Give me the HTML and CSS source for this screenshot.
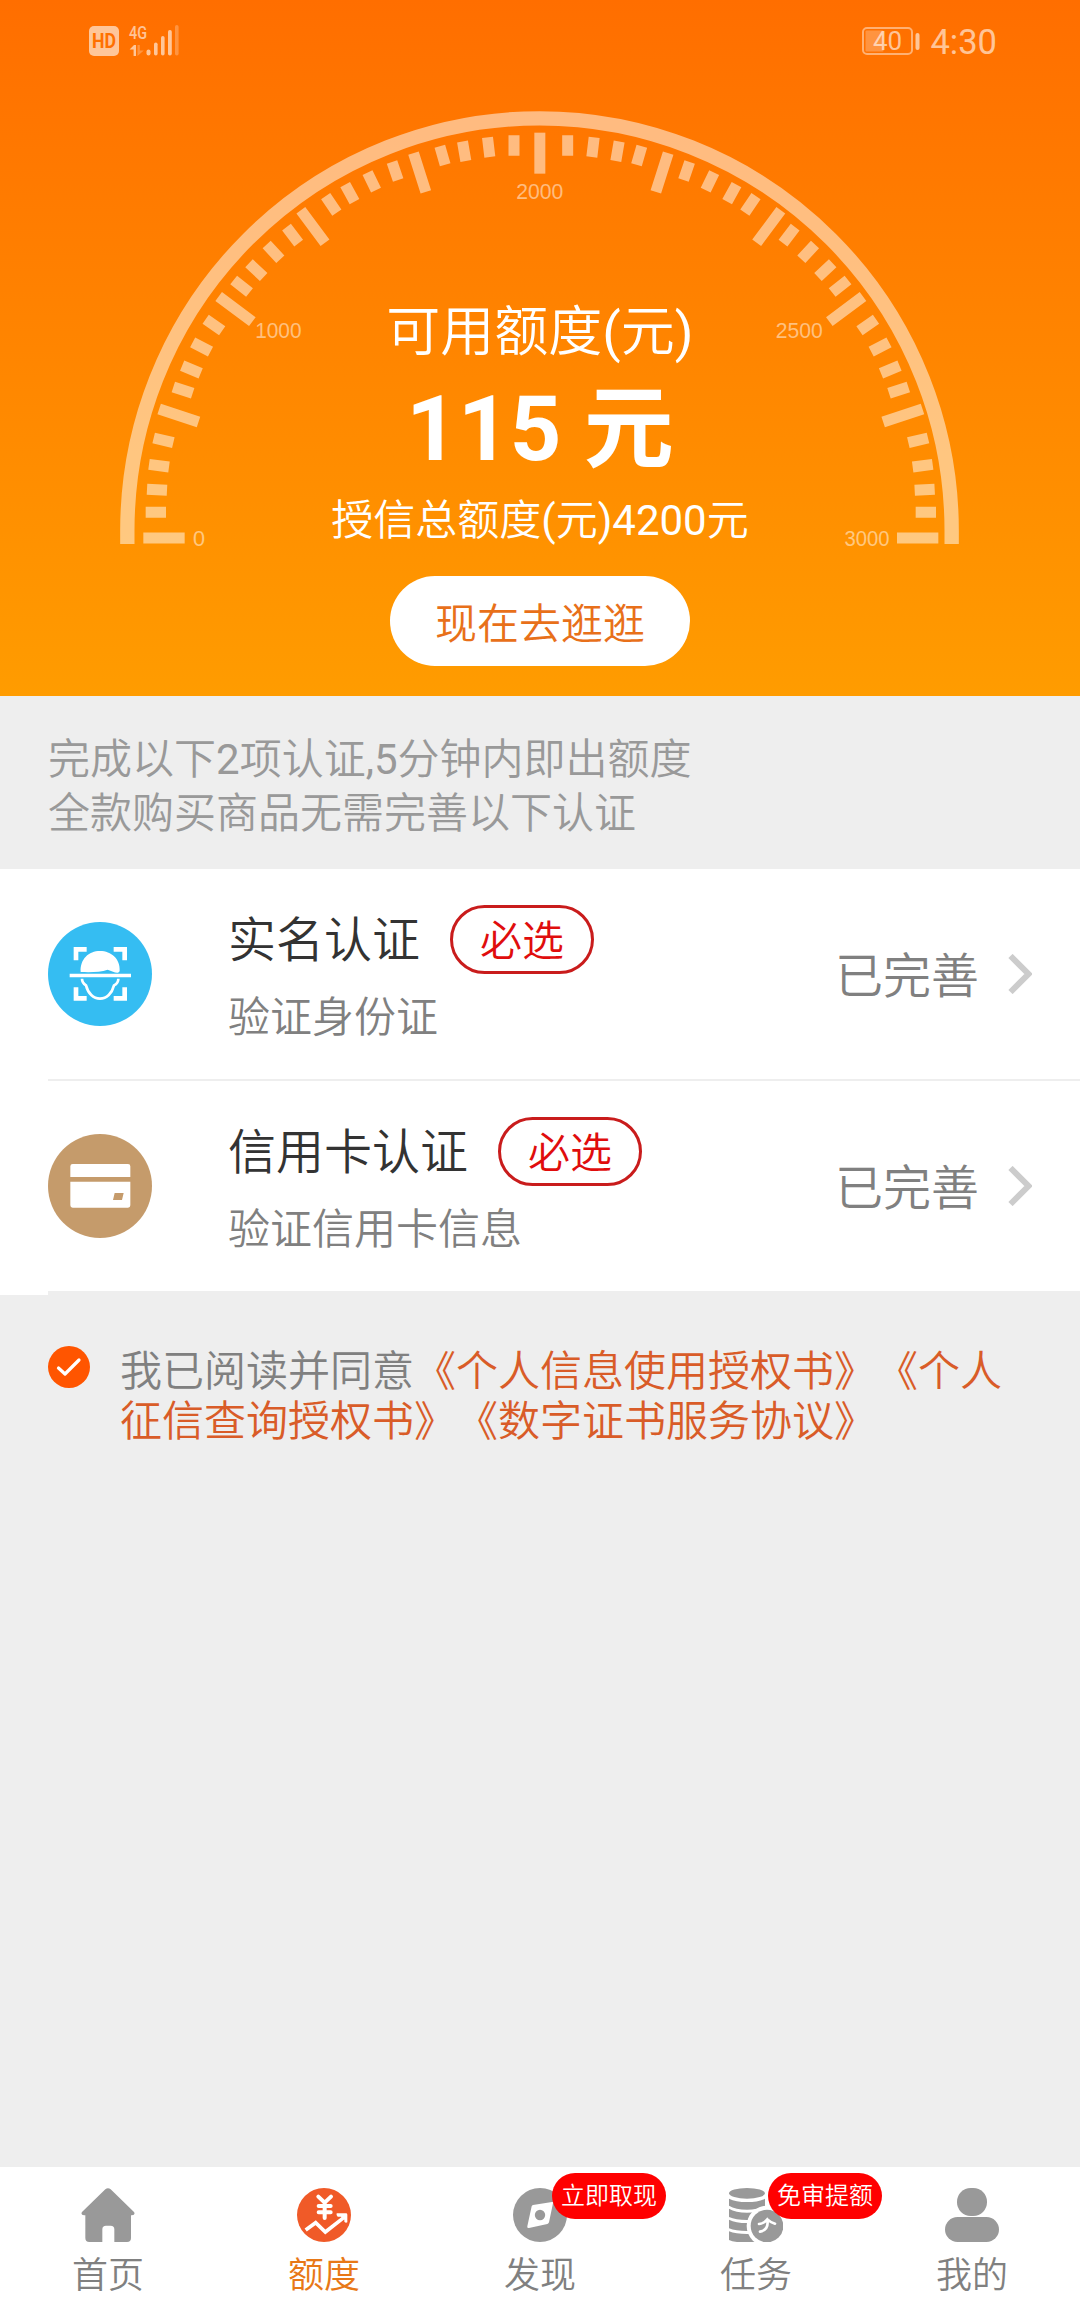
FILE: index.html
```html
<!DOCTYPE html>
<html lang="zh-CN">
<head>
<meta charset="utf-8">
<title>额度</title>
<link rel="stylesheet" href="styles.css">
</head>
<body>
<div class="screen">
  <header class="hero">
    <div class="status">
      <svg class="status-left" width="92" height="46" viewBox="0 -6 92 46">
        <rect x="0" y="2" width="30" height="30" rx="5" fill="#fff" fill-opacity=".6"/>
        <text class="hd" x="3" y="24" textLength="24" lengthAdjust="spacingAndGlyphs">HD</text>
        <text class="net" x="40" y="14.500" textLength="18" lengthAdjust="spacingAndGlyphs">4G</text>
        <g fill="#fff" fill-opacity=".6">
          <path d="M45 21h2v11h-2.400v-6.500h-4z"/>
          <path fill-opacity=".25" d="M48.500 21h2.300v5.500h4l-6.300 5.500z"/>
          <rect x="57.500" y="25.500" width="4" height="6" rx="2"/>
          <rect x="65" y="18.500" width="3.600" height="13" rx="1.800"/>
          <rect x="72" y="12" width="3.600" height="19.500" rx="1.800"/>
          <rect x="79" y="6" width="3.800" height="25.500" rx="1.800"/>
          <rect x="86" y="1" width="3.600" height="30.500" rx="1.800" fill-opacity=".25"/>
        </g>
      </svg>
      <div class="status-right">
        <svg width="58" height="28" viewBox="0 0 58 28">
          <rect x="1" y="1" width="49" height="26" rx="4" fill="none" stroke="#fff" stroke-opacity=".45" stroke-width="2"/>
          <rect x="3.500" y="3.500" width="18" height="21" rx="1" fill="#fff" fill-opacity=".25"/>
          <rect x="53.500" y="6" width="4" height="17" rx="2" fill="#fff" fill-opacity=".6"/>
          <text class="charge" x="25.500" y="23" text-anchor="middle">40</text>
        </svg>
        <span class="clock">4:30</span>
      </div>
    </div>

    <svg class="gauge" viewBox="0 0 2640 1350">
      <defs>
        <g id="ticks">
          <path d="M130 1314H254M177.500 927L295.500 966M356 589.500L457 665M602.500 330.500L675 428.500M940.500 159.500L977.500 275.500"/>
          <path d="M137 1237H198M141 1168L201 1171M147 1093L207 1101M161 1014L220 1028"/>
          <path d="M220 861L278 880M246.500 797L302 820M278 727L331.500 755M317 658L366.500 692"/>
          <path d="M401 540L448.500 577.500M447 490L491 531M500 433.500L541 478M559.500 381.500L596 429.500"/>
          <path d="M677 288.500L710.500 338M735.500 254L763.500 305M802.500 218L828 270.500M876 186L894.500 240"/>
          <path d="M1019.500 139L1035.500 194M1087.500 124.500L1097.500 183M1162.500 112L1169.500 171M1242 106V167"/>
        </g>
      </defs>
      <g fill="none" stroke="#fff" stroke-opacity=".5">
        <path stroke-width="43" d="M82 1332V1291A1236.500 1236.500 0 0 1 2555 1291V1332"/>
        <g stroke-width="33">
          <use href="#ticks"/>
          <path d="M1319.500 98V221"/>
          <use href="#ticks" transform="translate(2645 0) scale(-1 1)"/>
        </g>
      </g>
      <g class="scale">
        <text x="297" y="1337">0</text>
        <text x="535" y="713" textLength="139" lengthAdjust="spacingAndGlyphs">1000</text>
        <text x="1319.500" y="298" textLength="141" lengthAdjust="spacingAndGlyphs">2000</text>
        <text x="2098" y="713" textLength="141" lengthAdjust="spacingAndGlyphs">2500</text>
        <text x="2301" y="1337" textLength="135" lengthAdjust="spacingAndGlyphs">3000</text>
      </g>
    </svg>

    <div class="quota">
      <div class="quota-label">可用额度<span class="num">(</span>元<span class="num">)</span></div>
      <div class="quota-value">115 元</div>
      <div class="quota-total">授信总额度<span class="num">(</span>元<span class="num">)4200</span>元</div>
      <a class="shop">现在去逛逛</a>
    </div>
  </header>

  <p class="hint">完成以下<span class="num">2</span>项认证<span class="num">,5</span>分钟内即出额度<br>全款购买商品无需完善以下认证</p>

  <section class="list">
    <div class="row">
      <svg class="row-icon" viewBox="0 0 312 312">
        <circle cx="156" cy="156" r="156" fill="#35bdf2"/>
        <g fill="none" stroke="#fff" stroke-width="14">
          <path d="M84 115V82H116M197 82H230V115M230 196V229H197M116 229H84V196"/>
          <path stroke-width="11" d="M65 160.500H249"/>
          <path stroke-width="8" stroke-linejoin="round" d="M102 170C102 181 108 186 114 190C120 214 136 230 156 230C176 230 192 214 198 190C206 186 211 180 211 170"/>
        </g>
        <path fill="#fff" d="M98 150C96 111 122 87 156 87C190 87 217 111 215 146C213 155 203 152 195 149L179 143C157 151 127 151 98 150Z"/>
      </svg>
      <div class="row-main">
        <div class="row-head"><span class="row-title">实名认证</span><span class="tag">必选</span></div>
        <div class="row-sub">验证身份证</div>
      </div>
      <span class="row-state">已完善</span>
      <svg class="chevron" width="24" height="40" viewBox="0 0 24 40"><path d="M2.500 2L20.500 20L2.500 38"/></svg>
    </div>
    <div class="divider"></div>
    <div class="row">
      <svg class="row-icon" viewBox="0 0 312 312">
        <circle cx="156" cy="156" r="156" fill="#c59b6b"/>
        <path fill="#fff" fill-rule="evenodd" d="M74 90H240Q247 90 247 97V129H67V97Q67 90 74 90ZM67 143H247V214Q247 221 240 221H74Q67 221 67 214ZM200 177L195 198H222L227 177Z"/>
      </svg>
      <div class="row-main">
        <div class="row-head"><span class="row-title">信用卡认证</span><span class="tag">必选</span></div>
        <div class="row-sub">验证信用卡信息</div>
      </div>
      <span class="row-state">已完善</span>
      <svg class="chevron" width="24" height="40" viewBox="0 0 24 40"><path d="M2.500 2L20.500 20L2.500 38"/></svg>
    </div>
    <div class="divider divider-last"></div>
  </section>

  <div class="agree">
    <svg class="check" width="42" height="42" viewBox="0 0 42 42">
      <circle cx="21" cy="21" r="21" fill="#ff5500"/>
      <path d="M10.500 22L17 28L31 14" fill="none" stroke="#fff" stroke-width="3.200" stroke-linecap="round" stroke-linejoin="round"/>
    </svg>
    <p class="agree-text">我已阅读并同意<a>《个人信息使用授权书》</a><a>《个人征信查询授权书》</a><a>《数字证书服务协议》</a></p>
  </div>

  <nav class="tabs">
    <a class="tab">
      <svg viewBox="0 0 162 162"><path fill="#999" d="M73 4Q81 -3 89 4L159 72Q164 81 153 82H150V150Q150 162 138 162H100V124Q100 113 89 113H75Q64 113 64 124V162H25Q13 162 13 150V82H9Q-2 81 3 72Z"/></svg>
      <span>首页</span>
    </a>
    <a class="tab tab-on">
      <svg viewBox="0 0 162 162">
        <circle cx="81" cy="81" r="81" fill="#f05a28"/>
        <g fill="none" stroke="#fff" stroke-linecap="round" stroke-linejoin="round">
          <path stroke-width="12" d="M64 26L83 44L102 26M83 44V90M65 54H101M65 73H101"/>
          <path stroke-width="11" stroke-linecap="butt" stroke-linejoin="miter" d="M26 126L56 104L85 132L144 86"/>
        </g>
        <path fill="#fff" d="M119 76H147Q151 76 151 80V103Q146 106 142 101V95L132 86H122Q117 82 119 76Z"/>
      </svg>
      <span>额度</span>
    </a>
    <a class="tab">
      <svg viewBox="0 0 162 162">
        <circle cx="81" cy="81" r="81" fill="#999"/>
        <path fill="#fff" d="M60 51L117 42Q121 41 120 46L108 103Q107 107 103 108L48 120Q41 121 43 115L56 55Q57 52 60 51Z"/>
        <circle cx="81" cy="81" r="15.500" fill="#999"/>
      </svg>
      <b class="badge">立即取现</b>
      <span>发现</span>
    </a>
    <a class="tab">
      <svg viewBox="0 0 162 162">
        <g fill="#999">
          <ellipse cx="54" cy="16" rx="54" ry="16"/>
          <path d="M0 32Q20 42 54 42T108 32V53Q88 65 54 65T0 53Z"/>
          <path d="M0 62Q20 74 54 74T108 62V80Q88 96 54 96T0 87Z"/>
          <path d="M0 95Q20 105 54 105H90V129H54Q20 129 0 121Z"/>
          <path d="M0 130Q20 138 54 138H90V162H24Q8 161 0 156Z"/>
        </g>
        <circle cx="114" cy="114" r="61" fill="#fff"/>
        <circle cx="114" cy="114" r="49" fill="#999"/>
        <path d="M90 108Q104 107 115 94Q123 102 138 107M115 96Q120 126 93 131" fill="none" stroke="#fff" stroke-width="8" stroke-linecap="round"/>
      </svg>
      <b class="badge">免审提额</b>
      <span>任务</span>
    </a>
    <a class="tab">
      <svg viewBox="0 0 162 162"><rect x="36" y="0" width="90" height="84" rx="41" fill="#999"/><rect x="0" y="87" width="162" height="75" rx="37.500" fill="#999"/></svg>
      <span>我的</span>
    </a>
  </nav>
</div>
</body>
</html>
```
FILE: styles.css
```css
* { box-sizing: border-box; }
body {
  margin: 0;
  background: #eee;
  font-family: Roboto, "Noto Sans CJK SC", sans-serif;
  font-weight: 350;
  text-spacing-trim: space-all;
}
p { margin: 0; }
.screen {
  width: 1080px;
  height: 2312px;
  display: flex;
  flex-direction: column;
}

/* header */
.hero {
  position: relative;
  height: 696px;
  background: linear-gradient(#ff6e00, #ff9c00);
  color: #fff;
}
.status {
  height: 80px;
  padding: 2px 83px 0 89px;
  display: flex;
  justify-content: space-between;
  align-items: center;
}
.status-right { display: flex; align-items: center; gap: 10px; }
.hd { font: bold 20px Roboto, sans-serif; fill: #ff7000; }
.net { font: 500 19px Roboto, sans-serif; fill: rgba(255, 255, 255, .6); }
.charge { font: 400 26px Roboto, sans-serif; fill: rgba(255, 255, 255, .6); }
.clock { font-size: 34.5px; font-weight: 400; line-height: 36px; padding-top: 1px; color: rgba(255, 255, 255, .6); }
.gauge {
  position: absolute;
  left: 100px;
  top: 100px;
  width: 880px;
  height: 450px;
}
.scale { font: 65px "Liberation Sans", sans-serif; fill: rgba(255, 255, 255, .5); text-anchor: middle; }
.quota {
  position: relative;
  padding-top: 216px;
  display: flex;
  flex-direction: column;
  align-items: center;
}
.quota-label { font-size: 54px; line-height: 73px; }
.quota-value { font-size: 90px; line-height: 121px; font-weight: 700; }
.quota-total { font-size: 42px; line-height: 62px; }
.shop {
  margin-top: 24px;
  width: 300px;
  height: 90px;
  border-radius: 45px;
  background: #fff;
  color: #e8701a;
  font-size: 42px;
  line-height: 98px;
  text-align: center;
}

.hint {
  height: 173px;
  padding: 37px 48px 0;
  font-size: 42px;
  line-height: 54px;
  color: #999;
}
.num { font-weight: 400; }

/* verification list */
.list { background: #fff; }
.row {
  height: 210px;
  padding: 0 48px;
  display: flex;
  align-items: center;
}
.row-icon { width: 104px; height: 104px; }
.row-main { flex: 1; margin-left: 76px; height: 139px; }
.row-head { display: flex; align-items: center; gap: 30px; height: 70px; }
.row-title { font-size: 48px; line-height: 70px; padding-top: 3px; color: #333; }
.tag {
  width: 144px;
  height: 69px;
  border: 3px solid #c91c1c;
  border-radius: 35px;
  font-size: 42px;
  line-height: 68px;
  text-align: center;
  color: #e00d0d;
}
.row-sub { margin-top: 14px; font-size: 42px; line-height: 58px; color: #808080; }
.row-state { font-size: 48px; line-height: 60px; color: #808080; margin-right: 29px; padding-top: 6px; }
.chevron path { fill: none; stroke: #ccc; stroke-width: 6; }
.divider { height: 2px; margin-left: 48px; background: #eee; }
.divider-last { height: 4px; }

.agree { padding: 51px 48px 0; display: flex; gap: 30px; }
.check { flex: none; }
.agree-text { padding-top: 1px; font-size: 42px; line-height: 49.5px; color: #808080; }
.agree-text a { color: #d95c28; }

/* bottom tabs */
.tabs {
  margin-top: auto;
  height: 145px;
  background: #fff;
  display: flex;
}
.tab {
  position: relative;
  flex: 1;
  padding-top: 21px;
  display: flex;
  flex-direction: column;
  align-items: center;
  font-size: 36px;
  line-height: 42px;
  color: #808080;
}
.tab svg { width: 54px; height: 54px; margin-bottom: 13px; }
.tab-on { color: #e87817; }
.badge {
  position: absolute;
  left: 120px;
  top: 6px;
  width: 114px;
  height: 46px;
  border-radius: 23px;
  background: #f00;
  color: #fff;
  font-size: 24px;
  font-weight: 350;
  line-height: 46px;
  text-align: center;
}
```
